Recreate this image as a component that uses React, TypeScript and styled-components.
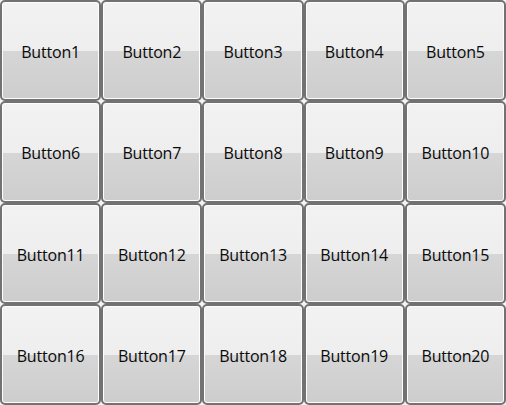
import React from "react";
import styled, { createGlobalStyle } from "styled-components";

const Global = createGlobalStyle`
  html, body { margin: 0; padding: 0; background: #f4f4f4; }
  #root { width: 506px; height: 405px; }
`;

const Grid = styled.div`
  width: 506px;
  height: 405px;
  display: grid;
  grid-template-columns: repeat(5, 1fr);
  grid-template-rows: repeat(4, 1fr);
  box-sizing: border-box;
`;

const Button = styled.button`
  box-sizing: border-box;
  margin: 0;
  padding: 3px 0 0 0;
  width: 100%;
  height: 100%;
  border: 2px solid #727272;
  border-radius: 5px;
  box-shadow: inset 0 0 0 1px #fdfdfd;
  background: linear-gradient(
    to bottom,
    #f2f2f2 0%,
    #eeeeee 51%,
    #d6d6d6 51%,
    #cdcdcd 100%
  );
  font-family: "Open Sans", "Noto Sans", sans-serif;
  font-size: 16px;
  letter-spacing: -0.2px;
  color: #0a0a0a;
  display: flex;
  align-items: center;
  justify-content: center;
  cursor: default;
`;

const labels = Array.from({ length: 20 }, (_, i) => `Button${i + 1}`);

export default function App() {
  return (
    <>
      <Global />
      <Grid>
        {labels.map((l) => (
          <Button key={l}>{l}</Button>
        ))}
      </Grid>
    </>
  );
}
